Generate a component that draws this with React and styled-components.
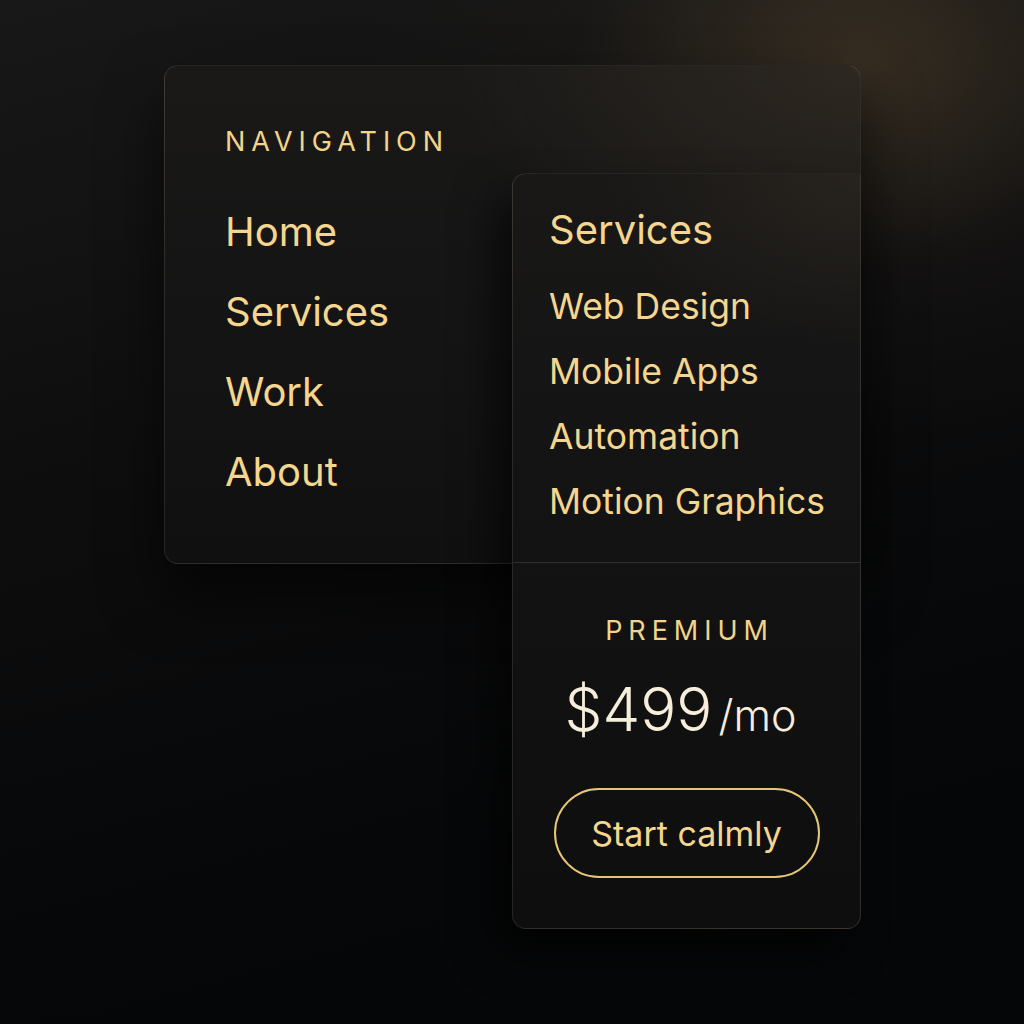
import React from 'react';
import styled, { createGlobalStyle } from 'styled-components';

const GlobalStyle = createGlobalStyle`
  html, body {
    margin: 0;
    padding: 0;
    background: #060707;
  }
  body {
    font-family: Inter, "Noto Sans", "Liberation Sans", sans-serif;
    -webkit-font-smoothing: antialiased;
  }
`;

const Page = styled.div`
  width: 1024px;
  height: 1024px;
  box-sizing: border-box;
  padding: 65px 0 0 164px;
  background:
    radial-gradient(ellipse 520px 380px at 860px 60px, rgba(84, 68, 46, 0.55), rgba(40, 34, 28, 0.22) 55%, transparent 100%),
    linear-gradient(165deg, #181818 0%, #0d0d0e 40%, #060708 75%, #050607 100%);
  overflow: hidden;
`;

const MainCard = styled.div`
  position: relative;
  width: 697px;
  height: 499px;
  box-sizing: border-box;
  padding: 60px 60px;
  border-radius: 14px;
  border: 1px solid rgba(255, 240, 210, 0.1);
  background:
    radial-gradient(ellipse 500px 300px at 100% 0%, rgba(70, 58, 44, 0.45), transparent 80%),
    linear-gradient(180deg, #1a1918 0%, #101011 100%);
  box-shadow: 0 30px 60px rgba(0, 0, 0, 0.6);
`;

const Label = styled.div`
  font-size: 27px;
  line-height: 32px;
  letter-spacing: 0.22em;
  color: #f2d48a;
  font-weight: 400;
`;

const NavList = styled.ul`
  list-style: none;
  margin: 34px 0 0;
  padding: 0;
`;

const NavItem = styled.li`
  font-size: 40px;
  line-height: 80px;
  color: #f4d68f;
`;

const Flyout = styled.div`
  position: absolute;
  top: 107px;
  left: 347px;
  width: 349px;
  height: 756px;
  box-sizing: border-box;
  display: flex;
  flex-direction: column;
  border: 1px solid rgba(255, 240, 210, 0.1);
  border-right-color: rgba(255, 240, 210, 0.14);
  border-radius: 14px 0 14px 14px;
  background:
    radial-gradient(ellipse 300px 200px at 100% 0%, rgba(62, 52, 40, 0.4), transparent 85%),
    linear-gradient(180deg, #191817 0%, #121213 55%, #0e0e0f 100%);
  box-shadow: -18px 24px 40px rgba(0, 0, 0, 0.6);
`;

const SubSection = styled.div`
  height: 389px;
  box-sizing: border-box;
  padding: 32px 0 0 36px;
  border-bottom: 1px solid rgba(255, 240, 210, 0.13);
`;

const SubTitle = styled.div`
  font-size: 40px;
  line-height: 48px;
  color: #f4d68f;
`;

const SubList = styled.ul`
  list-style: none;
  margin: 20px 0 0;
  padding: 0;
`;

const SubItem = styled.li`
  font-size: 35.5px;
  line-height: 65px;
  color: #f4d68f;
`;

const Pricing = styled.div`
  flex: 1;
  display: flex;
  flex-direction: column;
  align-items: center;
  padding-top: 52px;
`;

const Tier = styled.div`
  font-size: 27px;
  line-height: 32px;
  letter-spacing: 0.22em;
  padding-left: 0.22em;
  color: #f2d48a;
`;

const Price = styled.div`
  margin-top: 22px;
  padding-right: 12px;
  display: flex;
  align-items: baseline;
  gap: 6px;
  color: #f6eedb;
`;

const Amount = styled.span`
  font-size: 60px;
  line-height: 80px;
  font-weight: 300;
`;

const Period = styled.span`
  font-size: 43px;
  font-weight: 300;
`;

const CtaButton = styled.button`
  margin-top: 39px;
  width: 266px;
  height: 90px;
  border-radius: 45px;
  border: 2px solid #e6c676;
  background: transparent;
  color: #f4d68f;
  font-family: inherit;
  font-size: 34px;
  cursor: pointer;
`;

const services = ['Web Design', 'Mobile Apps', 'Automation', 'Motion Graphics'];
const navLinks = ['Home', 'Services', 'Work', 'About'];

const App = () => {
  return (
    <>
      <GlobalStyle />
      <Page>
        <MainCard>
          <Label>NAVIGATION</Label>
          <NavList>
            {navLinks.map((link) => (
              <NavItem key={link}>{link}</NavItem>
            ))}
          </NavList>
          <Flyout>
            <SubSection>
              <SubTitle>Services</SubTitle>
              <SubList>
                {services.map((s) => (
                  <SubItem key={s}>{s}</SubItem>
                ))}
              </SubList>
            </SubSection>
            <Pricing>
              <Tier>PREMIUM</Tier>
              <Price>
                <Amount>$499</Amount>
                <Period>/mo</Period>
              </Price>
              <CtaButton>Start calmly</CtaButton>
            </Pricing>
          </Flyout>
        </MainCard>
      </Page>
    </>
  );
};

export default App;
